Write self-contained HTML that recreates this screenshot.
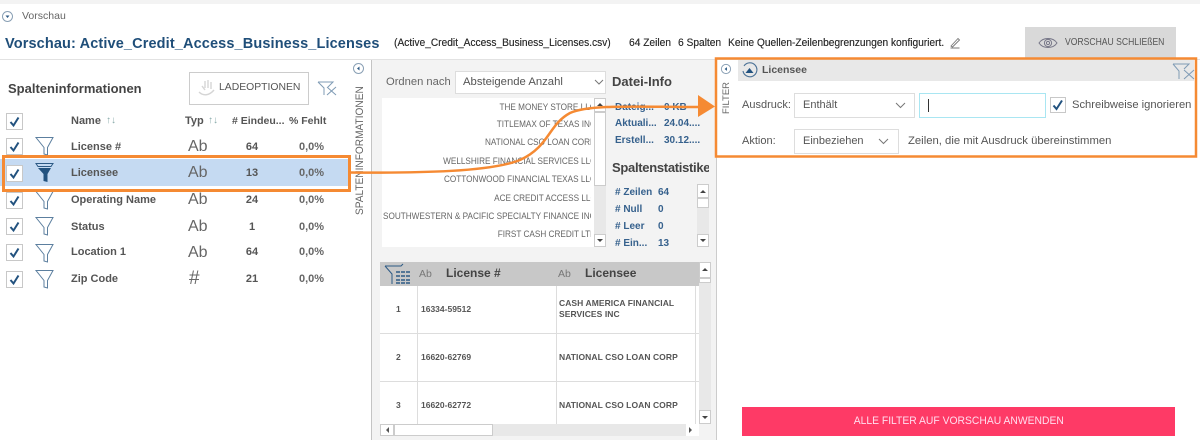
<!DOCTYPE html>
<html lang="de"><head><meta charset="utf-8"><title>Vorschau</title>
<style>
*{box-sizing:border-box}
html,body{margin:0;padding:0}
body{width:1200px;height:440px;overflow:hidden;background:#fff;position:relative;font-family:"Liberation Sans",sans-serif;color:#555}
.a{position:absolute;white-space:nowrap}
.b{font-weight:bold}
.nm{font-size:11px;font-weight:bold;color:#555;left:71px}
.ty{font-size:16px;color:#666;left:188px}
.ct{font-size:11px;font-weight:bold;color:#555;width:30px;text-align:center;left:237px}
.pc{font-size:11px;font-weight:bold;color:#666;left:299px}
.li{font-size:9px;color:#666;left:382px;width:209px;height:12px;line-height:12px;overflow:hidden;display:flex;justify-content:flex-end}
.li span{flex:none;display:inline-block;margin-right:-5px;transform-origin:100% 50%;transform:scaleX(.91)}
.lbl{font-size:10px;font-weight:bold;color:#36618d}
.sb{position:absolute;background:#fff;border:1px solid #ccc}
.sel{position:absolute;background:#fff;border:1px solid #ddd}
.cell{font-size:8.5px;font-weight:bold;color:#555;line-height:11px}
.hd{font-size:11px;color:#333;top:37px;transform-origin:0 0;transform:scaleX(.925);text-shadow:.2px 0 0 #333}
</style></head><body>
<div class="a" style="left:0;top:0;width:1200px;height:4px;background:#f3f3f3"></div>
<svg class="a" style="left:1px;top:10px" width="13" height="13" viewBox="0 0 13 13"><circle cx="6.500" cy="6.500" r="5" fill="none" stroke="#8aa0b5" stroke-width="1"/><path d="M4.500 5.500h4l-2 2.500z" fill="#2d5a85"/></svg>
<div class="a" style="left:22px;top:10px;font-size:10.500px;color:#666">Vorschau</div>
<div class="a b" style="left:5px;top:36px;font-size:14.500px;color:#1f4e79;letter-spacing:.13px">Vorschau: Active_Credit_Access_Business_Licenses</div>
<div class="a hd" style="left:394px">(Active_Credit_Access_Business_Licenses.csv)</div>
<div class="a hd" style="left:629px">64 Zeilen</div>
<div class="a hd" style="left:678px">6 Spalten</div>
<div class="a hd" style="left:728px">Keine Quellen-Zeilenbegrenzungen konfiguriert.</div>
<svg class="a" style="left:949px;top:36px" width="13" height="13" viewBox="0 0 13 13"><path d="M2 10 L9 2.500 L10.500 4 L3.500 11z M1.500 12h9" fill="none" stroke="#777" stroke-width=".9"/></svg>
<div class="a" style="left:1025px;top:27px;width:151px;height:31px;background:#d9d9d9"></div>
<svg class="a" style="left:1038px;top:36px" width="20" height="14" viewBox="0 0 20 14"><path d="M1 7C5 1 15 1 19 7C15 13 5 13 1 7z" fill="none" stroke="#778" stroke-width="1"/><circle cx="10" cy="7" r="3.600" fill="none" stroke="#778" stroke-width="1"/><circle cx="10" cy="7" r="1.600" fill="none" stroke="#778"/></svg>
<div class="a" style="left:1065px;top:37px;font-size:10px;color:#555;transform-origin:0 0;transform:scaleX(.86)">VORSCHAU SCHLIEßEN</div>

<div class="a" style="left:0;top:59px;width:1200px;height:1px;background:#e2e2e2"></div>
<div class="a" style="left:371px;top:60px;width:1px;height:380px;background:#c4c4c4"></div>
<div class="a" style="left:372px;top:60px;width:344px;height:380px;background:#f3f3f3"></div>
<div class="a" style="left:716px;top:60px;width:1px;height:380px;background:#ccc"></div>

<!-- left panel -->
<div class="a b" style="left:8px;top:81px;font-size:13px;color:#444">Spalteninformationen</div>
<div class="a" style="left:189px;top:72px;width:120px;height:33px;border:1px solid #ccc;background:#fff"></div>
<svg class="a" style="left:197px;top:79px" width="20" height="18" viewBox="0 0 20 18"><path d="M8 2v7M11 1v8M14 3v7M5 7l3 4M2 13c4 4 10 4 15-2" fill="none" stroke="#d5d5d5" stroke-width="1.400"/></svg>
<div class="a" style="left:219px;top:82px;font-size:10.400px;color:#555">LADEOPTIONEN</div>
<svg class="a" style="left:317px;top:80px" width="21" height="17" viewBox="0 0 21 17"><path d="M1 2H16L11 7M1 2L7 8V15M10 7L19 15M19 7L10 15" fill="none" stroke="#7f9bb5" stroke-width="1"/></svg>
<svg class="a" style="left:352px;top:62px" width="13" height="13" viewBox="0 0 13 13"><circle cx="6.500" cy="6.500" r="5" fill="none" stroke="#8aa0b5"/><path d="M7.500 4.500v4l-2.500-2z" fill="#2d5a85"/></svg>
<div class="a" style="left:354px;top:215px;font-size:11px;color:#666;transform-origin:0 0;transform:rotate(-90deg) scaleX(.92);line-height:13px">SPALTENINFORMATIONEN</div>

<div class="a" style="left:0;top:159px;width:348px;height:27px;background:#c5daf2"></div>
<div class="a b" style="left:71px;top:115px;font-size:11px;color:#555">Name</div>
<div class="a" style="left:106px;top:115px;font-size:10px;color:#8aa">↑↓</div>
<div class="a b" style="left:185px;top:115px;font-size:11px;color:#555">Typ</div>
<div class="a" style="left:208px;top:115px;font-size:10px;color:#8aa">↑↓</div>
<div class="a b" style="left:232px;top:115px;font-size:10.500px;color:#555">#&nbsp;Eindeu...</div>
<div class="a b" style="left:289px;top:115px;font-size:10.500px;color:#555">%&nbsp;Fehlt</div>

<svg class="a" style="left:0;top:110px" width="60" height="185" viewBox="0 0 60 185" fill="none">
<g stroke="#c8c8c8" fill="#fff"><rect x="6.500" y="3.500" width="16" height="16"/><rect x="6.500" y="28.500" width="16" height="16"/><rect x="6.500" y="55.500" width="16" height="16"/><rect x="6.500" y="82.500" width="16" height="16"/><rect x="6.500" y="108.500" width="16" height="16"/><rect x="6.500" y="134.500" width="16" height="16"/><rect x="6.500" y="161.500" width="16" height="16"/></g>
<g stroke="#22527f" stroke-width="2"><path d="M10.500 12l3 3.500 5-8"/><path d="M10.500 37l3 3.500 5-8"/><path d="M10.500 64l3 3.500 5-8"/><path d="M10.500 91l3 3.500 5-8"/><path d="M10.500 117l3 3.500 5-8"/><path d="M10.500 143l3 3.500 5-8"/><path d="M10.500 170l3 3.500 5-8"/></g>
<g stroke="#5c7f9f" stroke-width="1"><path d="M36 27.500H53L47.500 37.500V45L44 44V37.500z"/><path d="M36 81.500H53L47.500 91.500V99L44 98V91.500z"/><path d="M36 107.500H53L47.500 117.500V125L44 124V117.500z"/><path d="M36 134.500H53L47.500 144.500V152L44 151V144.500z"/><path d="M36 160.500H53L47.500 170.500V178L44 177V170.500z"/></g>
<path d="M36 53.500H53L51 56.500H38z" stroke="#2d5a85" fill="none"/><path d="M38 58H51L47.500 64V72L43.500 71V64z" fill="#22527f"/>
</svg>

<div class="a nm" style="top:141px">License #</div><div class="a ty" style="top:138px">Ab</div><div class="a ct" style="top:141px">64</div><div class="a pc" style="top:141px">0,0%</div>
<div class="a nm" style="top:167px">Licensee</div><div class="a ty" style="top:164px">Ab</div><div class="a ct" style="top:167px">13</div><div class="a pc" style="top:167px">0,0%</div>
<div class="a nm" style="top:194px">Operating Name</div><div class="a ty" style="top:191px">Ab</div><div class="a ct" style="top:194px">24</div><div class="a pc" style="top:194px">0,0%</div>
<div class="a nm" style="top:221px">Status</div><div class="a ty" style="top:218px">Ab</div><div class="a ct" style="top:221px">1</div><div class="a pc" style="top:221px">0,0%</div>
<div class="a nm" style="top:246px">Location 1</div><div class="a ty" style="top:244px">Ab</div><div class="a ct" style="top:246px">64</div><div class="a pc" style="top:246px">0,0%</div>
<div class="a nm" style="top:273px">Zip Code</div><div class="a ty" style="top:268px;left:189px;font-size:19px">#</div><div class="a ct" style="top:273px">21</div><div class="a pc" style="top:273px">0,0%</div>

<!-- middle -->
<div class="a" style="left:386px;top:76px;font-size:11.200px;color:#666">Ordnen nach</div>
<div class="sel" style="left:455px;top:71px;width:151px;height:23px"></div>
<div class="a" style="left:463px;top:76px;font-size:11.300px;color:#555">Absteigende Anzahl</div>
<svg class="a" style="left:594px;top:79px" width="10" height="7"><path d="M1 1l4 4 4-4" fill="none" stroke="#777"/></svg>
<div class="a" style="left:382px;top:98px;width:212px;height:149px;background:#fff"></div>
<div class="a li" style="top:101px"><span>THE MONEY STORE LLC</span></div>
<div class="a li" style="top:118px"><span>TITLEMAX OF TEXAS INC</span></div>
<div class="a li" style="top:136px"><span>NATIONAL CSO LOAN CORP</span></div>
<div class="a li" style="top:155px"><span>WELLSHIRE FINANCIAL SERVICES LLC</span></div>
<div class="a li" style="top:173px"><span>COTTONWOOD FINANCIAL TEXAS LLC</span></div>
<div class="a li" style="top:192px"><span>ACE CREDIT ACCESS LLC</span></div>
<div class="a li" style="top:210px"><span>SOUTHWESTERN &amp; PACIFIC SPECIALTY FINANCE INC</span></div>
<div class="a li" style="top:228px"><span>FIRST CASH CREDIT LTD</span></div>
<div class="a" style="left:594px;top:98px;width:12px;height:149px;background:#e8e8e8"></div>
<div class="sb" style="left:594px;top:112px;width:12px;height:74px"></div>
<div class="sb" style="left:594px;top:98px;width:12px;height:14px"></div>
<div class="sb" style="left:594px;top:234px;width:12px;height:13px"></div>
<svg class="a" style="left:594px;top:98px" width="12" height="149"><path d="M3 8h6l-3-3zM3 141h6l-3 3z" fill="#444"/></svg>

<div class="a b" style="left:612px;top:74px;font-size:13px;color:#444">Datei-Info</div>
<div class="a lbl" style="left:615px;top:102px">Dateig...</div><div class="a lbl" style="left:664px;top:102px">0 KB</div>
<div class="a lbl" style="left:615px;top:118px">Aktuali...</div><div class="a lbl" style="left:664px;top:118px">24.04....</div>
<div class="a lbl" style="left:615px;top:135px">Erstell...</div><div class="a lbl" style="left:664px;top:135px">30.12....</div>
<div class="a b" style="left:612px;top:160px;width:97px;overflow:hidden;font-size:13px;letter-spacing:-.3px;color:#444">Spaltenstatistiken</div>
<div class="a lbl" style="left:615px;top:187px">#&nbsp;Zeilen</div><div class="a lbl" style="left:658px;top:187px">64</div>
<div class="a lbl" style="left:615px;top:204px">#&nbsp;Null</div><div class="a lbl" style="left:658px;top:204px">0</div>
<div class="a lbl" style="left:615px;top:221px">#&nbsp;Leer</div><div class="a lbl" style="left:658px;top:221px">0</div>
<div class="a lbl" style="left:615px;top:238px">#&nbsp;Ein...</div><div class="a lbl" style="left:658px;top:238px">13</div>
<div class="a" style="left:697px;top:184px;width:12px;height:63px;background:#e8e8e8"></div>
<div class="sb" style="left:697px;top:184px;width:12px;height:14px"></div>
<div class="sb" style="left:697px;top:198px;width:12px;height:10px"></div>
<div class="sb" style="left:697px;top:234px;width:12px;height:13px"></div>
<svg class="a" style="left:697px;top:184px" width="12" height="63"><path d="M3 9h6l-3-3zM3 55h6l-3 3z" fill="#444"/></svg>

<!-- grid -->
<div class="a" style="left:380px;top:262px;width:319px;height:162px;background:#fff"></div>
<div class="a" style="left:380px;top:262px;width:319px;height:24px;background:#c8c8c8"></div>
<svg class="a" style="left:384px;top:263px" width="30" height="22" viewBox="0 0 30 22"><path d="M1 3H17L19 1M1 3L8 11V21" fill="none" stroke="#2d5a85" stroke-width="1"/><path d="M12 9h4M17 9h4M22 9h4M12 13h4M17 13h4M22 13h4M12 17h4M17 17h4M22 17h4M12 20h4M17 20h4M22 20h4" stroke="#2d5a85" stroke-width="1.500"/></svg>
<div class="a" style="left:419px;top:268px;font-size:10.500px;color:#777">Ab</div>
<div class="a b" style="left:446px;top:266px;font-size:12px;color:#444">License #</div>
<div class="a" style="left:558px;top:268px;font-size:10.500px;color:#777">Ab</div>
<div class="a b" style="left:585px;top:266px;font-size:12px;color:#444">Licensee</div>
<div class="a" style="left:380px;top:333px;width:319px;height:1px;background:#ddd"></div>
<div class="a" style="left:380px;top:381px;width:319px;height:1px;background:#ddd"></div>
<div class="a" style="left:417px;top:286px;width:1px;height:138px;background:#ddd"></div>
<div class="a" style="left:556px;top:286px;width:1px;height:138px;background:#ddd"></div>
<div class="a" style="left:695px;top:286px;width:1px;height:138px;background:#ddd"></div>
<div class="a cell" style="left:396px;top:304px">1</div>
<div class="a cell" style="left:421px;top:304px">16334-59512</div>
<div class="a cell" style="left:559px;top:298px;letter-spacing:.07px">CASH AMERICA FINANCIAL<br>SERVICES INC</div>
<div class="a cell" style="left:396px;top:352px">2</div>
<div class="a cell" style="left:421px;top:352px">16620-62769</div>
<div class="a cell" style="left:559px;top:352px;letter-spacing:.07px">NATIONAL CSO LOAN CORP</div>
<div class="a cell" style="left:396px;top:400px">3</div>
<div class="a cell" style="left:421px;top:400px">16620-62772</div>
<div class="a cell" style="left:559px;top:400px;letter-spacing:.07px">NATIONAL CSO LOAN CORP</div>
<div class="a" style="left:699px;top:262px;width:12px;height:162px;background:#e8e8e8"></div>
<div class="sb" style="left:699px;top:262px;width:12px;height:16px"></div>
<div class="sb" style="left:699px;top:278px;width:12px;height:5px"></div>
<div class="sb" style="left:699px;top:410px;width:12px;height:14px"></div>
<svg class="a" style="left:699px;top:262px" width="12" height="162"><path d="M3 9h6l-3-3zM3 154h6l-3 3z" fill="#444"/></svg>
<div class="a" style="left:380px;top:424px;width:319px;height:12px;background:#e8e8e8"></div>
<div class="sb" style="left:380px;top:424px;width:14px;height:12px"></div>
<div class="sb" style="left:394px;top:424px;width:99px;height:12px"></div>
<div class="a" style="left:686px;top:424px;width:13px;height:12px;background:#fff"></div>
<svg class="a" style="left:380px;top:424px" width="319" height="12"><path d="M9 3v6l-3-3zM309 3v6l3-3z" fill="#555"/></svg>

<!-- filter panel -->
<svg class="a" style="left:720px;top:63px" width="12" height="12" viewBox="0 0 13 13"><circle cx="6.500" cy="6.500" r="5" fill="none" stroke="#8aa0b5"/><path d="M7.500 4.500v4l-2.500-2z" fill="#2d5a85"/></svg>
<div class="a" style="left:721px;top:114px;font-size:9.500px;color:#666;line-height:12px;transform-origin:0 0;transform:rotate(-90deg)">FILTER</div>
<div class="a" style="left:738px;top:60px;width:456px;height:21px;background:#e8e8e8"></div>
<svg class="a" style="left:741px;top:62px" width="17" height="17" viewBox="0 0 17 17"><path d="M3 4A7 7 0 1 1 2 9" fill="none" stroke="#4c7296" stroke-width="1.100"/><path d="M4.500 11h8l-4-5z" fill="#22527f"/></svg>
<div class="a b" style="left:762px;top:64px;font-size:10.500px;color:#555">Licensee</div>
<svg class="a" style="left:1172px;top:62px" width="23" height="18" viewBox="0 0 23 18"><path d="M1 2H17L12 7M1 2L7 9V17M12 8L22 17M22 8L12 17" fill="none" stroke="#7f9bb5" stroke-width="1"/></svg>
<div class="a" style="left:742px;top:99px;font-size:11px;color:#555">Ausdruck:</div>
<div class="sel" style="left:794px;top:93px;width:121px;height:25px"></div>
<div class="a" style="left:803px;top:99px;font-size:11px;color:#555">Enthält</div>
<svg class="a" style="left:895px;top:102px" width="11" height="7"><path d="M1 1l4.500 4.500 4.500-4.500" fill="none" stroke="#777"/></svg>
<div class="a" style="left:919px;top:93px;width:127px;height:25px;background:#fff;border:1px solid #a9e6f2"></div>
<div class="a" style="left:928px;top:99px;width:1px;height:13px;background:#333"></div>
<div class="a" style="left:1050px;top:97px;width:16px;height:16px;background:#fff;border:1px solid #c8c8c8"></div>
<svg class="a" style="left:1050px;top:97px" width="16" height="16" fill="none"><path d="M3.500 8.500l3 3.500 5.500-8.500" stroke="#22527f" stroke-width="2"/></svg>
<div class="a" style="left:1072px;top:99px;font-size:11.200px;color:#555">Schreibweise ignorieren</div>
<div class="a" style="left:742px;top:135px;font-size:11px;color:#555">Aktion:</div>
<div class="sel" style="left:794px;top:129px;width:105px;height:25px"></div>
<div class="a" style="left:803px;top:135px;font-size:11px;color:#555">Einbeziehen</div>
<svg class="a" style="left:878px;top:138px" width="11" height="7"><path d="M1 1l4.500 4.500 4.500-4.500" fill="none" stroke="#777"/></svg>
<div class="a" style="left:908px;top:135px;font-size:11.300px;color:#555">Zeilen, die mit Ausdruck übereinstimmen</div>

<div class="a" style="left:742px;top:407px;width:433px;height:29px;background:#fe3a66;color:#fde;font-size:11px;text-align:center;line-height:29px"><span style="display:inline-block;transform:scaleX(.94)">ALLE FILTER AUF VORSCHAU ANWENDEN</span></div>

<!-- orange annotations -->
<svg class="a" style="left:0;top:0" width="1200" height="440" fill="none">
<rect x="3.500" y="156.500" width="346" height="34" stroke="#f58a33" stroke-width="3"/>
<rect x="716" y="58.500" width="480" height="98" stroke="#f58a33" stroke-width="2.500"/>
<path d="M350 172.500C420 173 490 172 520 160C550 146 548 125 570 113C590 104 640 107 700 107" stroke="#f58a33" stroke-width="2.500"/>
<path d="M698 95L715 106.500L698 117z" fill="#f58a33"/>
</svg>
</body></html>
